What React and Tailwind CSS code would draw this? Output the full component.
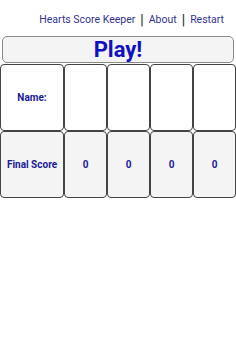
export default function App() {
  const cols = [0, 1, 2, 3];
  return (
    <div className="w-[236px] h-[364px] bg-white" style={{ fontFamily: "Roboto, 'Liberation Sans', Arial, sans-serif" }}>
      <div className="flex justify-end items-center pt-[11px] pr-[12px] h-[28px] text-[10.5px] text-[#33338f]">
        <span>Hearts Score Keeper</span>
        <span className="mx-[5px] text-[#222] text-[14px] leading-none">|</span>
        <span>About</span>
        <span className="mx-[5px] text-[#222] text-[14px] leading-none">|</span>
        <span>Restart</span>
      </div>
      <div className="px-[2px] mt-[8px]">
        <div className="h-[27px] border border-[#8a8a8a] rounded-[5px] bg-[#f4f4f4] flex items-center justify-center text-[22px] font-bold text-[#1010c0] leading-none">
          Play!
        </div>
      </div>
      <div className="grid grid-cols-[64px_43px_43px_43px_43px] mt-[1px]">
        <div className="h-[67px] border border-[#444] rounded-[4px] bg-white flex items-center justify-center text-[10px] font-bold text-[#1a1a9a]">Name:</div>
        {cols.map((c) => (
          <div key={"n" + c} className="h-[67px] border border-[#444] rounded-[4px] bg-white"></div>
        ))}
        <div className="h-[67px] border border-[#444] rounded-[4px] bg-[#f4f4f4] flex items-center justify-center text-[10px] font-bold text-[#1a1a9a]">Final Score</div>
        {cols.map((c) => (
          <div key={"s" + c} className="h-[67px] border border-[#444] rounded-[4px] bg-[#f4f4f4] flex items-center justify-center text-[10px] font-bold text-[#1a1a9a]">0</div>
        ))}
      </div>
    </div>
  );
}
